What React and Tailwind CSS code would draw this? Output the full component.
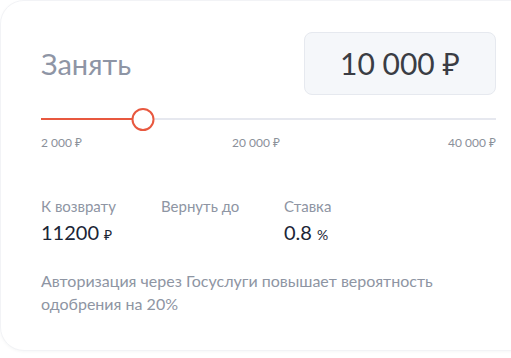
const Stat = ({ label, value, unit, className }) => (
  <div className={className}>
    <div className="text-[15px] leading-[18px] text-[#8e95a3]">{label}</div>
    <div className="mt-[5px] h-[24px] text-[20px] leading-[24px] text-[#1b2536]">
      {value}
      {unit && <span className="ml-[5px] text-[14px]">{unit}</span>}
    </div>
  </div>
);

const App = () => {
  const percent = 22.4;

  return (
    <div className="w-[511px] h-[358px] overflow-hidden bg-white font-['Lato','Noto_Sans',sans-serif]">
      <div className="w-[560px] h-[351px] rounded-[24px] bg-white border border-[#f2f3f6] shadow-[0_1px_3px_rgba(30,40,60,0.04)]">
        <div className="w-[455px] ml-[40px] pt-[31px]">

          {/* amount row */}
          <div className="flex items-center justify-between">
            <span className="text-[29px] text-[#8e95a5]">Занять</span>
            <div className="w-[192px] h-[63px] rounded-[8px] bg-[#f5f7fa] border border-[#e6e9ef] flex items-center justify-center text-[30px] text-[#3a3d44]">
              10 000 ₽
            </div>
          </div>

          {/* slider */}
          <div className="relative mt-[13px] h-[22px] flex items-center">
            <div className="w-full h-[2px] bg-[#e6e8ef]" />
            <div className="absolute left-0 h-[2px] bg-[#e8583f]" style={{ width: `${percent}%` }} />
            <div
              className="absolute w-[23px] h-[23px] rounded-full bg-white border-2 border-[#e8583f] -translate-x-1/2"
              style={{ left: `${percent}%` }}
            />
          </div>
          <div className="mt-[5px] flex justify-between text-[12px] leading-[15px] text-[#8b909a]">
            <span>2 000 ₽</span>
            <span className="-ml-[18px]">20 000 ₽</span>
            <span>40 000 ₽</span>
          </div>

          {/* stats */}
          <div className="mt-[47px] flex">
            <Stat className="w-[120px]" label="К возврату" value="11200" unit="₽" />
            <Stat className="w-[123px]" label="Вернуть до" value="" />
            <Stat label="Ставка" value="0.8" unit="%" />
          </div>

          <p className="mt-[25px] text-[16px] leading-[23px] text-[#8e95a3]">
            Авторизация через Госуслуги повышает вероятность
            <br />
            одобрения на 20%
          </p>
        </div>
      </div>
    </div>
  );
};

export default App;
